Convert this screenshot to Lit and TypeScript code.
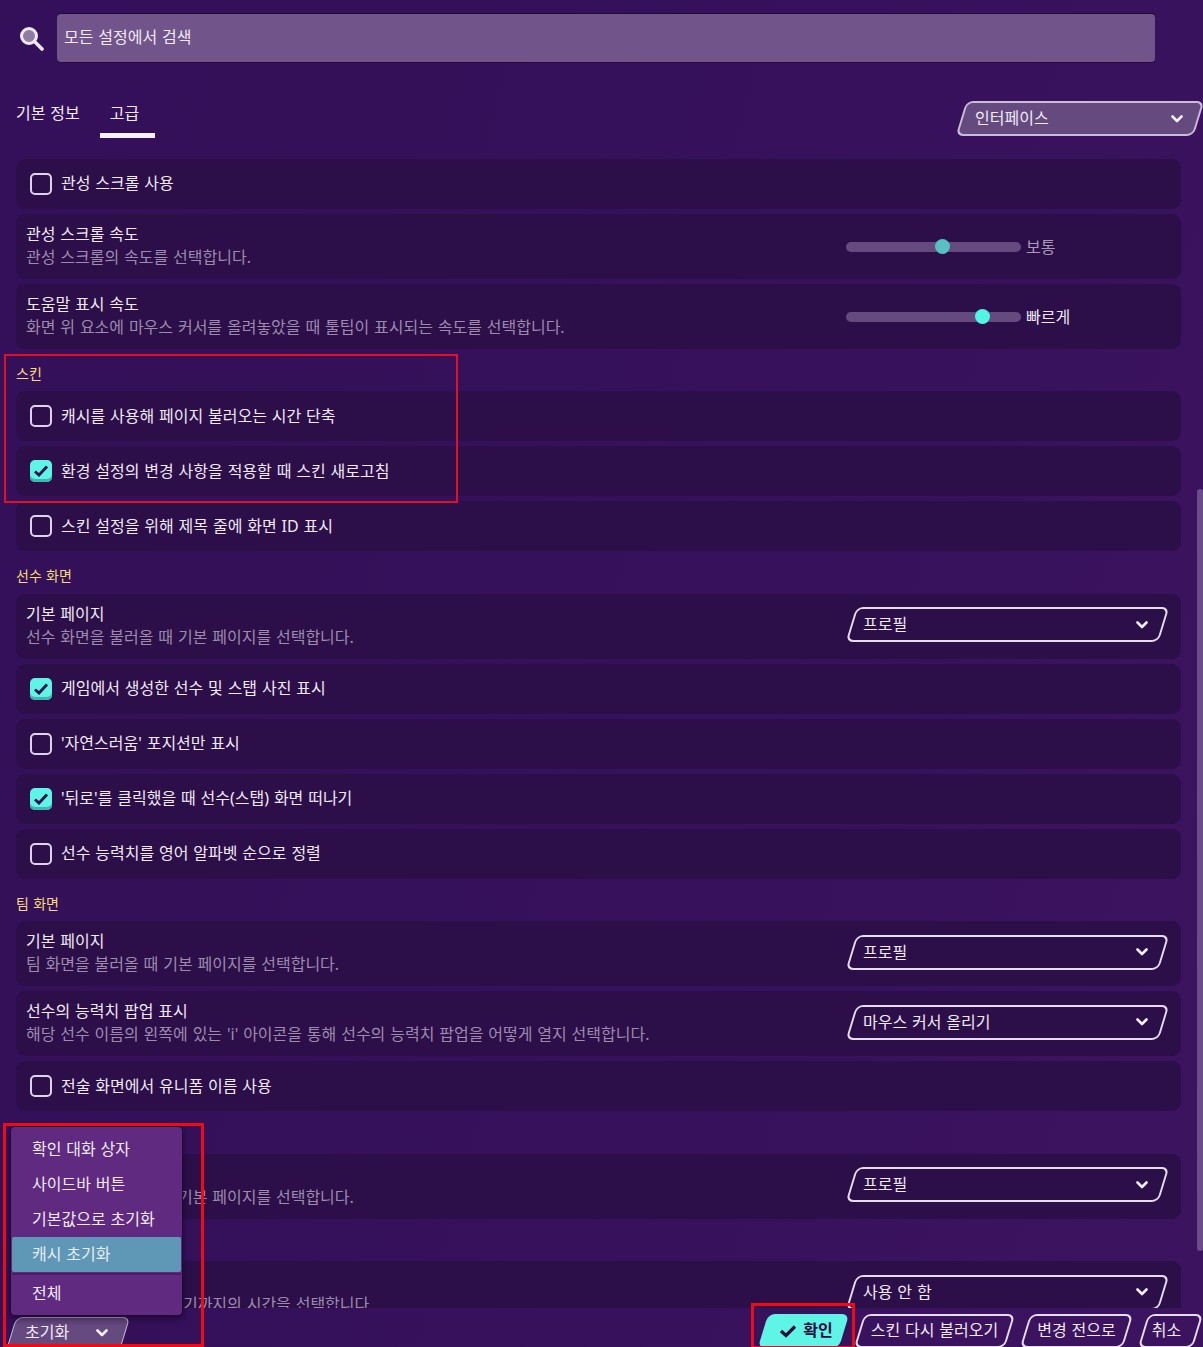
import { LitElement, html, css, nothing } from "lit";
import { customElement } from "lit/decorators.js";

type Row =
  | { kind: "check"; label: string; on?: boolean }
  | { kind: "slider"; title: string; desc: string; pos: number; value: string; bright?: boolean }
  | { kind: "select"; title: string; desc: string; value: string }
  | { kind: "head"; label: string };

const rows: Row[] = [
  { kind: "check", label: "관성 스크롤 사용" },
  { kind: "slider", title: "관성 스크롤 속도", desc: "관성 스크롤의 속도를 선택합니다.", pos: 55, value: "보통" },
  { kind: "slider", title: "도움말 표시 속도", desc: "화면 위 요소에 마우스 커서를 올려놓았을 때 툴팁이 표시되는 속도를 선택합니다.", pos: 78, value: "빠르게", bright: true },
  { kind: "head", label: "스킨" },
  { kind: "check", label: "캐시를 사용해 페이지 불러오는 시간 단축" },
  { kind: "check", label: "환경 설정의 변경 사항을 적용할 때 스킨 새로고침", on: true },
  { kind: "check", label: "스킨 설정을 위해 제목 줄에 화면 ID 표시" },
  { kind: "head", label: "선수 화면" },
  { kind: "select", title: "기본 페이지", desc: "선수 화면을 불러올 때 기본 페이지를 선택합니다.", value: "프로필" },
  { kind: "check", label: "게임에서 생성한 선수 및 스탭 사진 표시", on: true },
  { kind: "check", label: "'자연스러움' 포지션만 표시" },
  { kind: "check", label: "'뒤로'를 클릭했을 때 선수(스탭) 화면 떠나기", on: true },
  { kind: "check", label: "선수 능력치를 영어 알파벳 순으로 정렬" },
  { kind: "head", label: "팀 화면" },
  { kind: "select", title: "기본 페이지", desc: "팀 화면을 불러올 때 기본 페이지를 선택합니다.", value: "프로필" },
  { kind: "select", title: "선수의 능력치 팝업 표시", desc: "해당 선수 이름의 왼쪽에 있는 'i' 아이콘을 통해 선수의 능력치 팝업을 어떻게 열지 선택합니다.", value: "마우스 커서 올리기" },
  { kind: "check", label: "전술 화면에서 유니폼 이름 사용" },
  { kind: "head", label: "대회 화면" },
  { kind: "select", title: "기본 페이지", desc: "대회 화면을 불러올 때 기본 페이지를 선택합니다.", value: "프로필" },
  { kind: "head", label: "메시지" },
  { kind: "select", title: "메시지 자동 닫기", desc: "메시지가 자동으로 닫히기까지의 시간을 선택합니다", value: "사용 안 함" },
];

const chevron = html`<svg class="chev" width="12" height="8" viewBox="0 0 12 8"><path d="M1.5 1.5 L6 6 L10.5 1.5" fill="none" stroke="currentColor" stroke-width="2.6" stroke-linecap="round" stroke-linejoin="round"/></svg>`;

@customElement("app-root")
export class AppRoot extends LitElement {
  static styles = css`
    :host {
      display: flex;
      flex-direction: column;
      position: relative;
      width: 1203px;
      height: 1347px;
      overflow: hidden;
      background: linear-gradient(105deg, #331059 0%, #37115b 60%, #3c135f 100%);
      color: #f0eaf5;
      font: 16px/23px "Noto Sans", "Noto Sans CJK KR", sans-serif;
      word-spacing: 0.7px;
    }
    .search { display: flex; align-items: center; gap: 13px; padding: 14px 48px 0 19px; }
    .search svg { flex: none; }
    .field {
      flex: 1; height: 48px; box-sizing: border-box; padding: 0 7px 1px; display: flex; align-items: center;
      background: #70548a; border-radius: 4px; box-shadow: 0 -1px 0 #1f0a35, 0 1px 0 #240b3d;
    }
    .tabs { display: flex; justify-content: space-between; align-items: flex-start; margin-top: 39px; padding-left: 16px; height: 37px; }
    .tablist { display: flex; gap: 30px; }
    .tab { position: relative; height: 37px; line-height: 25px; }
    .tab.on::after { content: ""; position: absolute; left: -10px; right: -16px; top: 32px; height: 5px; background: #f6f1f9; }
    .skew { position: relative; display: flex; align-items: center; box-sizing: border-box; z-index: 0; }
    .skew::before {
      content: ""; position: absolute; inset: 0; z-index: -1; box-sizing: border-box;
      transform: skewX(-17deg); border: 2px solid #e5dcec; border-radius: 7px;
    }
    .select { height: 35px; justify-content: space-between; padding: 0 16px 0 12px; }
    .chev { flex: none; color: #f4eff8; }
    .top-select { width: 238px; margin-right: 4px; padding-left: 14px; }
    .top-select::before, .reset::before { background: #654a80; border-color: #c9bdd5; }
    .body { flex: 1; min-height: 0; overflow: hidden; padding: 20.7px 22px 0 16px; }
    .list { display: flex; flex-direction: column; gap: 5px; }
    .head { height: 32.5px; padding-top: 8px; box-sizing: border-box; font-size: 14px; line-height: 24px; color: #f6dc74; }
    .row { display: flex; align-items: center; background: #2c0e49; border-radius: 9px; box-sizing: border-box; }
    .row.c { height: 50px; padding-left: 14px; gap: 9px; }
    .row.t { height: 65px; padding: 0 17px 1px 10px; justify-content: space-between; }
    .box { width: 22px; height: 22px; box-sizing: border-box; border: 2px solid #dfd3e9; border-radius: 5px; flex: none; display: flex; align-items: center; justify-content: center; }
    .box.on { border: 0; background: #5ef5e6; box-shadow: inset 0 -3px 0 #3fb6ae; }
    .desc { color: #9d8bae; }
    .row .select { width: 313px; flex: none; margin-bottom: 2px; }
    .slider { display: flex; align-items: center; gap: 5px; width: 318px; flex: none; margin-top: 2px; }
    .track { position: relative; width: 175px; height: 10px; border-radius: 5px; background: #654a80; flex: none; }
    .knob { position: absolute; top: -2.5px; width: 15px; height: 15px; margin-left: -7.5px; border-radius: 50%; background: #5abfc2; }
    .knob.bright { background: #4ff6e4; }
    .slider .val { color: #a99ab8; position: relative; top: 1px; }
    .slider .val.bright { color: #f0eaf5; }
    .foot { height: 39px; flex: none; display: flex; align-items: flex-start; justify-content: space-between; padding: 6px 5px 0 11px; box-sizing: border-box; overflow: hidden; }
    .reset { width: 114px; height: 34px; margin-top: 3px; justify-content: space-between; padding: 0 17px 0 14px; }
    .reset span { position: relative; top: -2px; }
    .reset .chev { position: relative; top: -1px; }
    .reset::before { border-width: 1px; }
    .btns { display: flex; gap: 15px; }
    .btn { height: 34px; justify-content: center; }
    .btn span { position: relative; top: -1px; }
    .ok { width: 81px; gap: 6px; padding-left: 5px; color: #240b3d; font-weight: 700; }
    .ok::before { background: #5ef5e6; border-color: #5ef5e6; }
    .w1 { width: 151px; } .w2 { width: 103px; } .w3 { width: 55px; padding-right: 8px; }
    .menu {
      position: absolute; left: 11px; top: 1127px; width: 171px; height: 188px; padding: 5px 1px 0; box-sizing: border-box;
      background: #5f2a7f; border-radius: 4px; box-shadow: 0 0 0 1px #1f0a35, 0 3px 8px rgba(15,3,30,.7); z-index: 3;
    }
    .item { height: 35px; line-height: 35px; padding-left: 20px; }
    .item.sel { background: #5f97b6; border-radius: 2px; color: #e4edf3; }
    .sep { height: 2px; margin: 1px 0 1px; background: #4a1f68; }
    .bar { position: absolute; right: 0; top: 489px; width: 6px; height: 762px; border-radius: 3px; background: #6a4c88; }
    .mark { position: absolute; box-sizing: border-box; border: 2px solid #e3101f; pointer-events: none; z-index: 5; }
    .m1 { left: 4px; top: 354px; width: 454px; height: 149px; }
    .m2 { left: 3px; top: 1123px; width: 201px; height: 224px; border-width: 3px; border-color: #f00a14; }
    .m3 { left: 751px; top: 1303px; width: 104px; height: 46px; border-width: 3px; border-color: #f00a14; }
  `;

  private renderRow(r: Row) {
    switch (r.kind) {
      case "head":
        return html`<div class="head">${r.label}</div>`;
      case "check":
        return html`<div class="row c">
          <div class="box ${r.on ? "on" : ""}">
            ${r.on ? html`<svg width="16" height="14" viewBox="0 0 16 14"><path d="M2 7.5 L6 11 L14 2.5" fill="none" stroke="#2c0e49" stroke-width="2.8"/></svg>` : nothing}
          </div>
          <div>${r.label}</div>
        </div>`;
      case "slider":
        return html`<div class="row t">
          <div><div>${r.title}</div><div class="desc">${r.desc}</div></div>
          <div class="slider">
            <div class="track"><div class="knob ${r.bright ? "bright" : ""}" style="left:${r.pos}%"></div></div>
            <div class="val ${r.bright ? "bright" : ""}">${r.value}</div>
          </div>
        </div>`;
      case "select":
        return html`<div class="row t">
          <div><div>${r.title}</div><div class="desc">${r.desc}</div></div>
          <div class="skew select"><span>${r.value}</span>${chevron}</div>
        </div>`;
    }
  }

  render() {
    return html`
      <div class="search">
        <svg width="25" height="25" viewBox="0 0 25 25">
          <circle cx="10" cy="10" r="7.5" fill="#8f7ba3" stroke="#efe9f3" stroke-width="3"/>
          <path d="M15.5 15.5 L23 23" stroke="#efe9f3" stroke-width="3.6" stroke-linecap="round"/>
        </svg>
        <div class="field">모든 설정에서 검색</div>
      </div>
      <div class="tabs">
        <div class="tablist">
          <div class="tab">기본 정보</div>
          <div class="tab on">고급</div>
        </div>
        <div class="skew select top-select"><span>인터페이스</span>${chevron}</div>
      </div>
      <div class="body">
        <div class="list">${rows.map((r) => this.renderRow(r))}</div>
      </div>
      <div class="foot">
        <div class="skew reset"><span>초기화</span>${chevron}</div>
        <div class="btns">
          <div class="skew btn ok">
            <svg width="18" height="14" viewBox="0 0 18 14"><path d="M2 7 L7 11.5 L16 2.5" fill="none" stroke="#240b3d" stroke-width="3.2"/></svg>
            <span>확인</span>
          </div>
          <div class="skew btn w1"><span>스킨 다시 불러오기</span></div>
          <div class="skew btn w2"><span>변경 전으로</span></div>
          <div class="skew btn w3"><span>취소</span></div>
        </div>
      </div>
      <div class="bar"></div>
      <div class="menu">
        <div class="item">확인 대화 상자</div>
        <div class="item">사이드바 버튼</div>
        <div class="item">기본값으로 초기화</div>
        <div class="item sel">캐시 초기화</div>
        <div class="sep"></div>
        <div class="item">전체</div>
      </div>
      <div class="mark m1"></div>
      <div class="mark m2"></div>
      <div class="mark m3"></div>
    `;
  }
}
